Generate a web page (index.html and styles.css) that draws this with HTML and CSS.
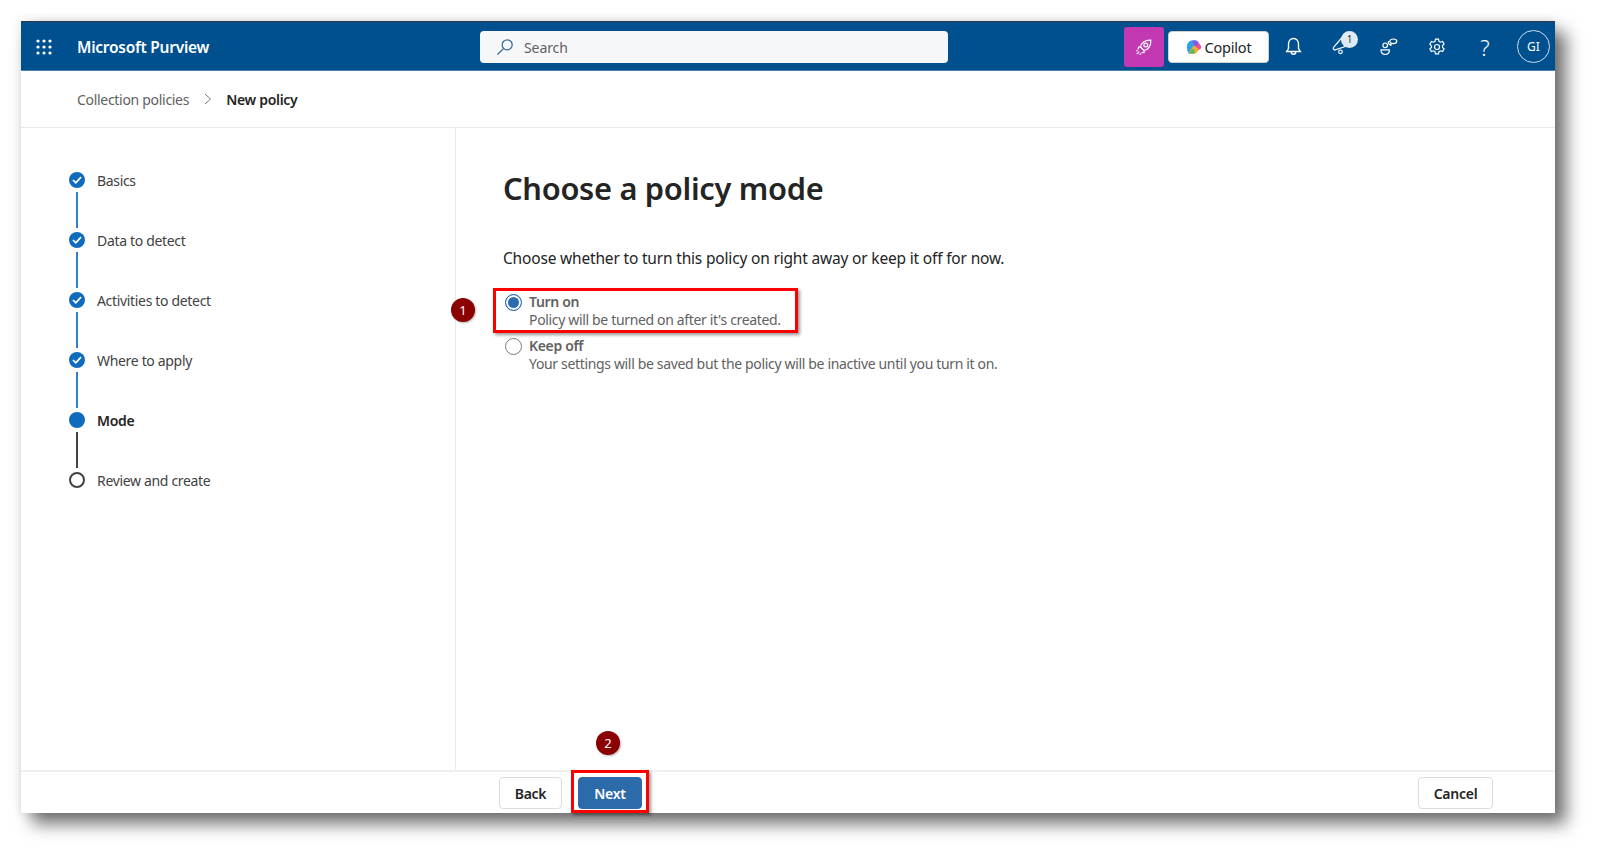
FILE: index.html
```html
<!DOCTYPE html>
<html lang="en">
<head>
<meta charset="utf-8">
<title>New policy - Microsoft Purview</title>
<link rel="stylesheet" href="styles.css">
</head>
<body>
<div class="window">
  <header class="topbar">
    <div class="brand">
      <svg class="waffle" width="16" height="16" viewBox="0 0 16 16"><g fill="#fff"><circle cx="2" cy="2" r="1.6"/><circle cx="8" cy="2" r="1.6"/><circle cx="14" cy="2" r="1.6"/><circle cx="2" cy="8" r="1.6"/><circle cx="8" cy="8" r="1.6"/><circle cx="14" cy="8" r="1.6"/><circle cx="2" cy="14" r="1.6"/><circle cx="8" cy="14" r="1.6"/><circle cx="14" cy="14" r="1.6"/></g></svg>
      <span class="brand-name">Microsoft Purview</span>
    </div>
    <div class="search">
      <svg width="18" height="18" viewBox="0 0 18 18" fill="none" stroke="#3d6b99" stroke-width="1.3"><circle cx="11.200" cy="6.800" r="5"/><path d="M7.500 10.500 1.500 16.500"/></svg>
      <span class="search-text">Search</span>
    </div>
    <div class="actions">
      <div class="rocket">
        <svg width="18" height="18" viewBox="0 0 18 18" fill="none" stroke="#fff" stroke-width="1.2"><path d="M5.500 9C6 5 10 1.800 15.800 2.200 16.200 8 13 12 9 12.500Z"/><circle cx="10.800" cy="7" r="1.900"/><path d="M5.500 9 3.800 8.800 3 11.500M9 12.500l.2 1.700-2.700.8"/><path d="M1.800 16.200l2.500-2.500M1.300 13.300l1.200-1.200M4.700 16.700l1.200-1.200"/></svg>
      </div>
      <div class="copilot">
        <svg width="16" height="16" viewBox="0 0 14 14"><path d="M.8 7C.8 3.500 3 1 5.800 1l2.200 1.200-3.200 10L3 13C1.500 12 .8 9.500.8 7Z" fill="#2ea3e8"/><path d="M5.800 1H8c1.600 0 2.600.8 3.200 2.500L9.800 8.300 6.800 5.500Z" fill="#8a58e2"/><path d="M11.200 3.500C12.800 4.800 13.500 6.500 13.200 8.200L10.500 10 8 7Z" fill="#ea4f98"/><path d="M3 13c-.8-.5 2-6 4-7.200l3.800 2.600C11 11 9 13 7 13Z" fill="#f4ae2c"/><path d="M3 13 5.500 8.500 8 10 7 13Z" fill="#58bd5c"/></svg>
        <span>Copilot</span>
      </div>
      <button class="icon-btn" aria-label="Notifications">
        <svg width="17" height="19" viewBox="0 0 17 19" fill="none" stroke="#fff" stroke-width="1.4"><path d="M8.500 1.500C5.300 1.500 3.500 4 3.500 7v4.500L1.700 14.500h13.600l-1.800-3V7c0-3-1.800-5.500-5-5.500Z"/><path d="M6.200 14.800c0 1.500 1 2.500 2.300 2.500s2.300-1 2.300-2.500"/></svg>
      </button>
      <button class="icon-btn" aria-label="What's new">
        <svg class="megaphone" width="20" height="22" viewBox="0 0 20 22" fill="none" stroke="#fff" stroke-width="1.200"><path d="M14 1 2.800 14c-.8 1.200-.6 2.300.7 3L19 12"/><circle cx="9.500" cy="18.800" r="1.800"/></svg>
        <span class="count">1</span>
      </button>
      <button class="icon-btn" aria-label="Community">
        <svg width="18" height="18" viewBox="0 0 18 18" fill="none" stroke="#fff" stroke-width="1.2"><circle cx="5.200" cy="7.300" r="2.300"/><path d="M1 11.800h8.400c.3 3-1.700 4.700-4.200 4.700S.7 14.800 1 11.800Z"/><ellipse cx="13.300" cy="3.300" rx="3.500" ry="2.300"/><path d="M11.500 5.300 10.800 7.300 9.200 6.300a2 2 0 0 1-.2-3.200"/></svg>
      </button>
      <button class="icon-btn" aria-label="Settings">
        <svg width="18" height="18" viewBox="0 0 18 18" fill="none" stroke="#fff" stroke-width="1.2"><circle cx="9" cy="9" r="2.500"/><path d="M7.500 1.200h3l.5 2.200 1.500.8 2.100-.7 1.500 2.600-1.600 1.500v1.800l1.600 1.500-1.500 2.600-2.100-.7-1.500.8-.5 2.200h-3l-.5-2.200-1.500-.8-2.100.7-1.500-2.600 1.600-1.500V8.100L1.900 6.100l1.500-2.600 2.100.7L7 3.400Z"/></svg>
      </button>
      <button class="icon-btn help" aria-label="Help">?</button>
      <div class="avatar">GI</div>
    </div>
  </header>

  <nav class="crumbs">
    <span class="crumb">Collection policies</span>
    <svg class="crumb-sep" width="8" height="12" viewBox="0 0 8 12" fill="none" stroke="#777" stroke-width="1"><path d="M1 1l5.500 5L1 11"/></svg>
    <span class="crumb-current">New policy</span>
  </nav>

  <div class="body">
    <aside class="steps">
      <div class="step done"><span class="dot"><svg width="10" height="8" viewBox="0 0 10 8" fill="none" stroke="#fff" stroke-width="1.700"><path d="M1 4l2.800 2.800L9 1.200"/></svg></span><span>Basics</span></div>
      <div class="rail done"></div>
      <div class="step done"><span class="dot"><svg width="10" height="8" viewBox="0 0 10 8" fill="none" stroke="#fff" stroke-width="1.700"><path d="M1 4l2.800 2.800L9 1.200"/></svg></span><span>Data to detect</span></div>
      <div class="rail done"></div>
      <div class="step done"><span class="dot"><svg width="10" height="8" viewBox="0 0 10 8" fill="none" stroke="#fff" stroke-width="1.700"><path d="M1 4l2.800 2.800L9 1.200"/></svg></span><span>Activities to detect</span></div>
      <div class="rail done"></div>
      <div class="step done"><span class="dot"><svg width="10" height="8" viewBox="0 0 10 8" fill="none" stroke="#fff" stroke-width="1.700"><path d="M1 4l2.800 2.800L9 1.200"/></svg></span><span>Where to apply</span></div>
      <div class="rail done"></div>
      <div class="step current"><span class="dot"></span><span>Mode</span></div>
      <div class="rail"></div>
      <div class="step todo"><span class="dot"></span><span>Review and create</span></div>
    </aside>
    <main class="content">
      <h1>Choose a policy mode</h1>
      <p class="lead">Choose whether to turn this policy on right away or keep it off for now.</p>
      <div class="options">
        <div class="option">
          <span class="radio checked"></span>
          <div class="option-text"><div class="option-title">Turn on</div><div class="option-desc">Policy will be turned on after it's created.</div></div>
          <span class="redbox redbox-radio"></span>
          <span class="marker marker-1">1</span>
        </div>
        <div class="option">
          <span class="radio"></span>
          <div class="option-text"><div class="option-title">Keep off</div><div class="option-desc">Your settings will be saved but the policy will be inactive until you turn it on.</div></div>
        </div>
      </div>
    </main>
  </div>

  <footer class="footer">
    <div class="footer-left">
      <button class="btn">Back</button>
      <div class="next-wrap">
        <button class="btn primary">Next</button>
        <span class="redbox redbox-next"></span>
        <span class="marker marker-2">2</span>
      </div>
    </div>
    <button class="btn cancel">Cancel</button>
  </footer>
</div>
</body>
</html>
```
FILE: styles.css
```css
* { box-sizing: border-box; }
html, body { margin: 0; height: 100%; background: #fff; overflow: hidden; }
body { padding: 21px 0 0 21px; font-family: "Noto Sans", "Open Sans", "Liberation Sans", sans-serif; color: #242424; }

.window {
  width: 1534px;
  height: 792px;
  background: #fff;
  display: flex;
  flex-direction: column;
  box-shadow: 11px 11px 16px rgba(0,0,0,.55), 0 0 10px rgba(0,0,0,.12);
}

.topbar {
  height: 50px;
  flex: none;
  background: #00508f;
  border-top: 1px solid #2b3a46;
  border-bottom: 1px solid #4a7fae;
  padding-top: 1px;
  display: flex;
  align-items: center;
  color: #fff;
  position: relative;
}
.brand { display: flex; align-items: center; width: 459px; padding-left: 15px; flex: none; }
.waffle { flex: none; }
.brand-name { margin-left: 25px; font-size: 15.500px; font-weight: 600; letter-spacing: -.25px; }
.search {
  width: 468px;
  height: 32px;
  background: #f6f7f9;
  border-radius: 4px;
  display: flex;
  align-items: center;
  gap: 10px;
  padding-left: 16px;
  color: #616161;
  font-size: 14px;
  letter-spacing: -.1px;
  flex: none;
}
.search-text { padding-top: 1px; }
.actions { margin-left: auto; display: flex; align-items: center; height: 100%; padding-right: 5px; }
.rocket {
  width: 40px;
  height: 40px;
  background: #c239b3;
  border-radius: 3px;
  display: flex;
  align-items: center;
  justify-content: center;
  margin-right: 4px;
}
.copilot {
  width: 101px;
  height: 32px;
  background: #fff;
  border-radius: 4px;
  border: 1px solid #d1d1d1;
  display: flex;
  align-items: center;
  justify-content: center;
  gap: 3px;
  color: #242424;
  font-size: 14.500px;
  letter-spacing: -.2px;
}
.icon-btn {
  width: 48px;
  height: 48px;
  background: none;
  border: 0;
  padding: 0;
  color: #fff;
  display: flex;
  align-items: center;
  justify-content: center;
  position: relative;
  font-family: inherit;
}
.megaphone { margin-bottom: 6px; }
.help { font-size: 22px; font-weight: 300; }
.count {
  position: absolute;
  top: 8px;
  right: 7px;
  width: 17px;
  height: 17px;
  border-radius: 50%;
  background: #dfeaf7;
  color: #333;
  font-size: 10px;
  line-height: 17px;
  text-align: center;
}
.avatar {
  width: 33px;
  height: 33px;
  border-radius: 50%;
  border: 1px solid #cfdde9;
  display: flex;
  align-items: center;
  justify-content: center;
  font-size: 12px;
  margin-left: 8px;
}

.crumbs {
  height: 57px;
  flex: none;
  border-bottom: 1px solid #e9e9e9;
  display: flex;
  align-items: center;
  padding-left: 56px;
  font-size: 14px;
  letter-spacing: -.3px;
}
.crumb { color: #616161; }
.crumb-sep { margin: 0 14px 0 15px; }
.crumb-current { font-weight: 600; }

.body { flex: 1; display: flex; min-height: 0; }
.steps {
  width: 435px;
  flex: none;
  border-right: 1px solid #e9e9e9;
  padding: 43px 0 0 48px;
  font-size: 14px;
  letter-spacing: -.33px;
  color: #424242;
}
.step { display: flex; align-items: center; height: 18px; gap: 12px; }
.dot {
  width: 16px;
  height: 16px;
  border-radius: 50%;
  background: #0f6cbd;
  display: flex;
  align-items: center;
  justify-content: center;
  flex: none;
}
.step.todo .dot { background: #fff; border: 2px solid #424242; }
.step.current { font-weight: 600; color: #242424; }
.rail { width: 2px; height: 36px; margin: 3px 0 3px 7px; background: #424242; }
.rail.done { background: #2f80c8; }

.content { flex: 1; padding: 33px 0 0 47px; }
h1 { margin: 0; font-size: 30.800px; line-height: 54px; font-weight: 600; letter-spacing: -.3px; color: #242424; }
.lead { margin: 32px 0 0; font-size: 15.500px; line-height: 22px; letter-spacing: -.18px; }
.options { margin-top: 24px; display: flex; flex-direction: column; gap: 8px; }
.option { display: flex; gap: 7px; position: relative; padding-left: 2px; color: #616161; font-size: 14px; line-height: 18px; letter-spacing: -.34px; }
.option-title { font-weight: 600; }
.radio {
  width: 17px;
  height: 17px;
  border-radius: 50%;
  border: 1px solid #7a7a7a;
  background: #fff;
  flex: none;
  margin-top: 1px;
}
.radio.checked { border-color: #2d6cae; background: #2d6cae; box-shadow: inset 0 0 0 2px #fff; }
.redbox { position: absolute; border: 3px solid #f00; box-shadow: 2px 2px 3px rgba(0,0,0,.4); pointer-events: none; }
.redbox-radio { left: -10px; top: -5px; width: 305px; height: 45px; }
.marker {
  position: absolute;
  width: 24px;
  height: 24px;
  border-radius: 50%;
  background: #8b0000;
  color: #fff;
  font-size: 13px;
  line-height: 24px;
  text-align: center;
  box-shadow: 1px 1px 2px rgba(0,0,0,.3);
  letter-spacing: 0;
  font-weight: 400;
}
.marker-1 { left: -52px; top: 5px; }

.footer {
  height: 43px;
  flex: none;
  border-top: 2px solid #efefef;
  display: flex;
  align-items: flex-start;
  justify-content: space-between;
  padding: 5px 62px 0 478px;
}
.footer-left { display: flex; gap: 16px; }
.next-wrap { position: relative; }
.btn {
  height: 32px;
  min-width: 63px;
  padding: 0 12px;
  background: #fff;
  border: 1px solid #dcdcdc;
  border-radius: 4px;
  font-family: inherit;
  font-size: 14px;
  font-weight: 600;
  letter-spacing: -.25px;
  color: #242424;
  display: block;
}
.btn.primary { background: #2d6aa9; border-color: #2d6aa9; color: #fff; width: 64px; }
.btn.cancel { width: 75px; }
.redbox-next { left: -7px; top: -7px; width: 78px; height: 43px; }
.marker-2 { left: 18px; top: -46px; }
```
